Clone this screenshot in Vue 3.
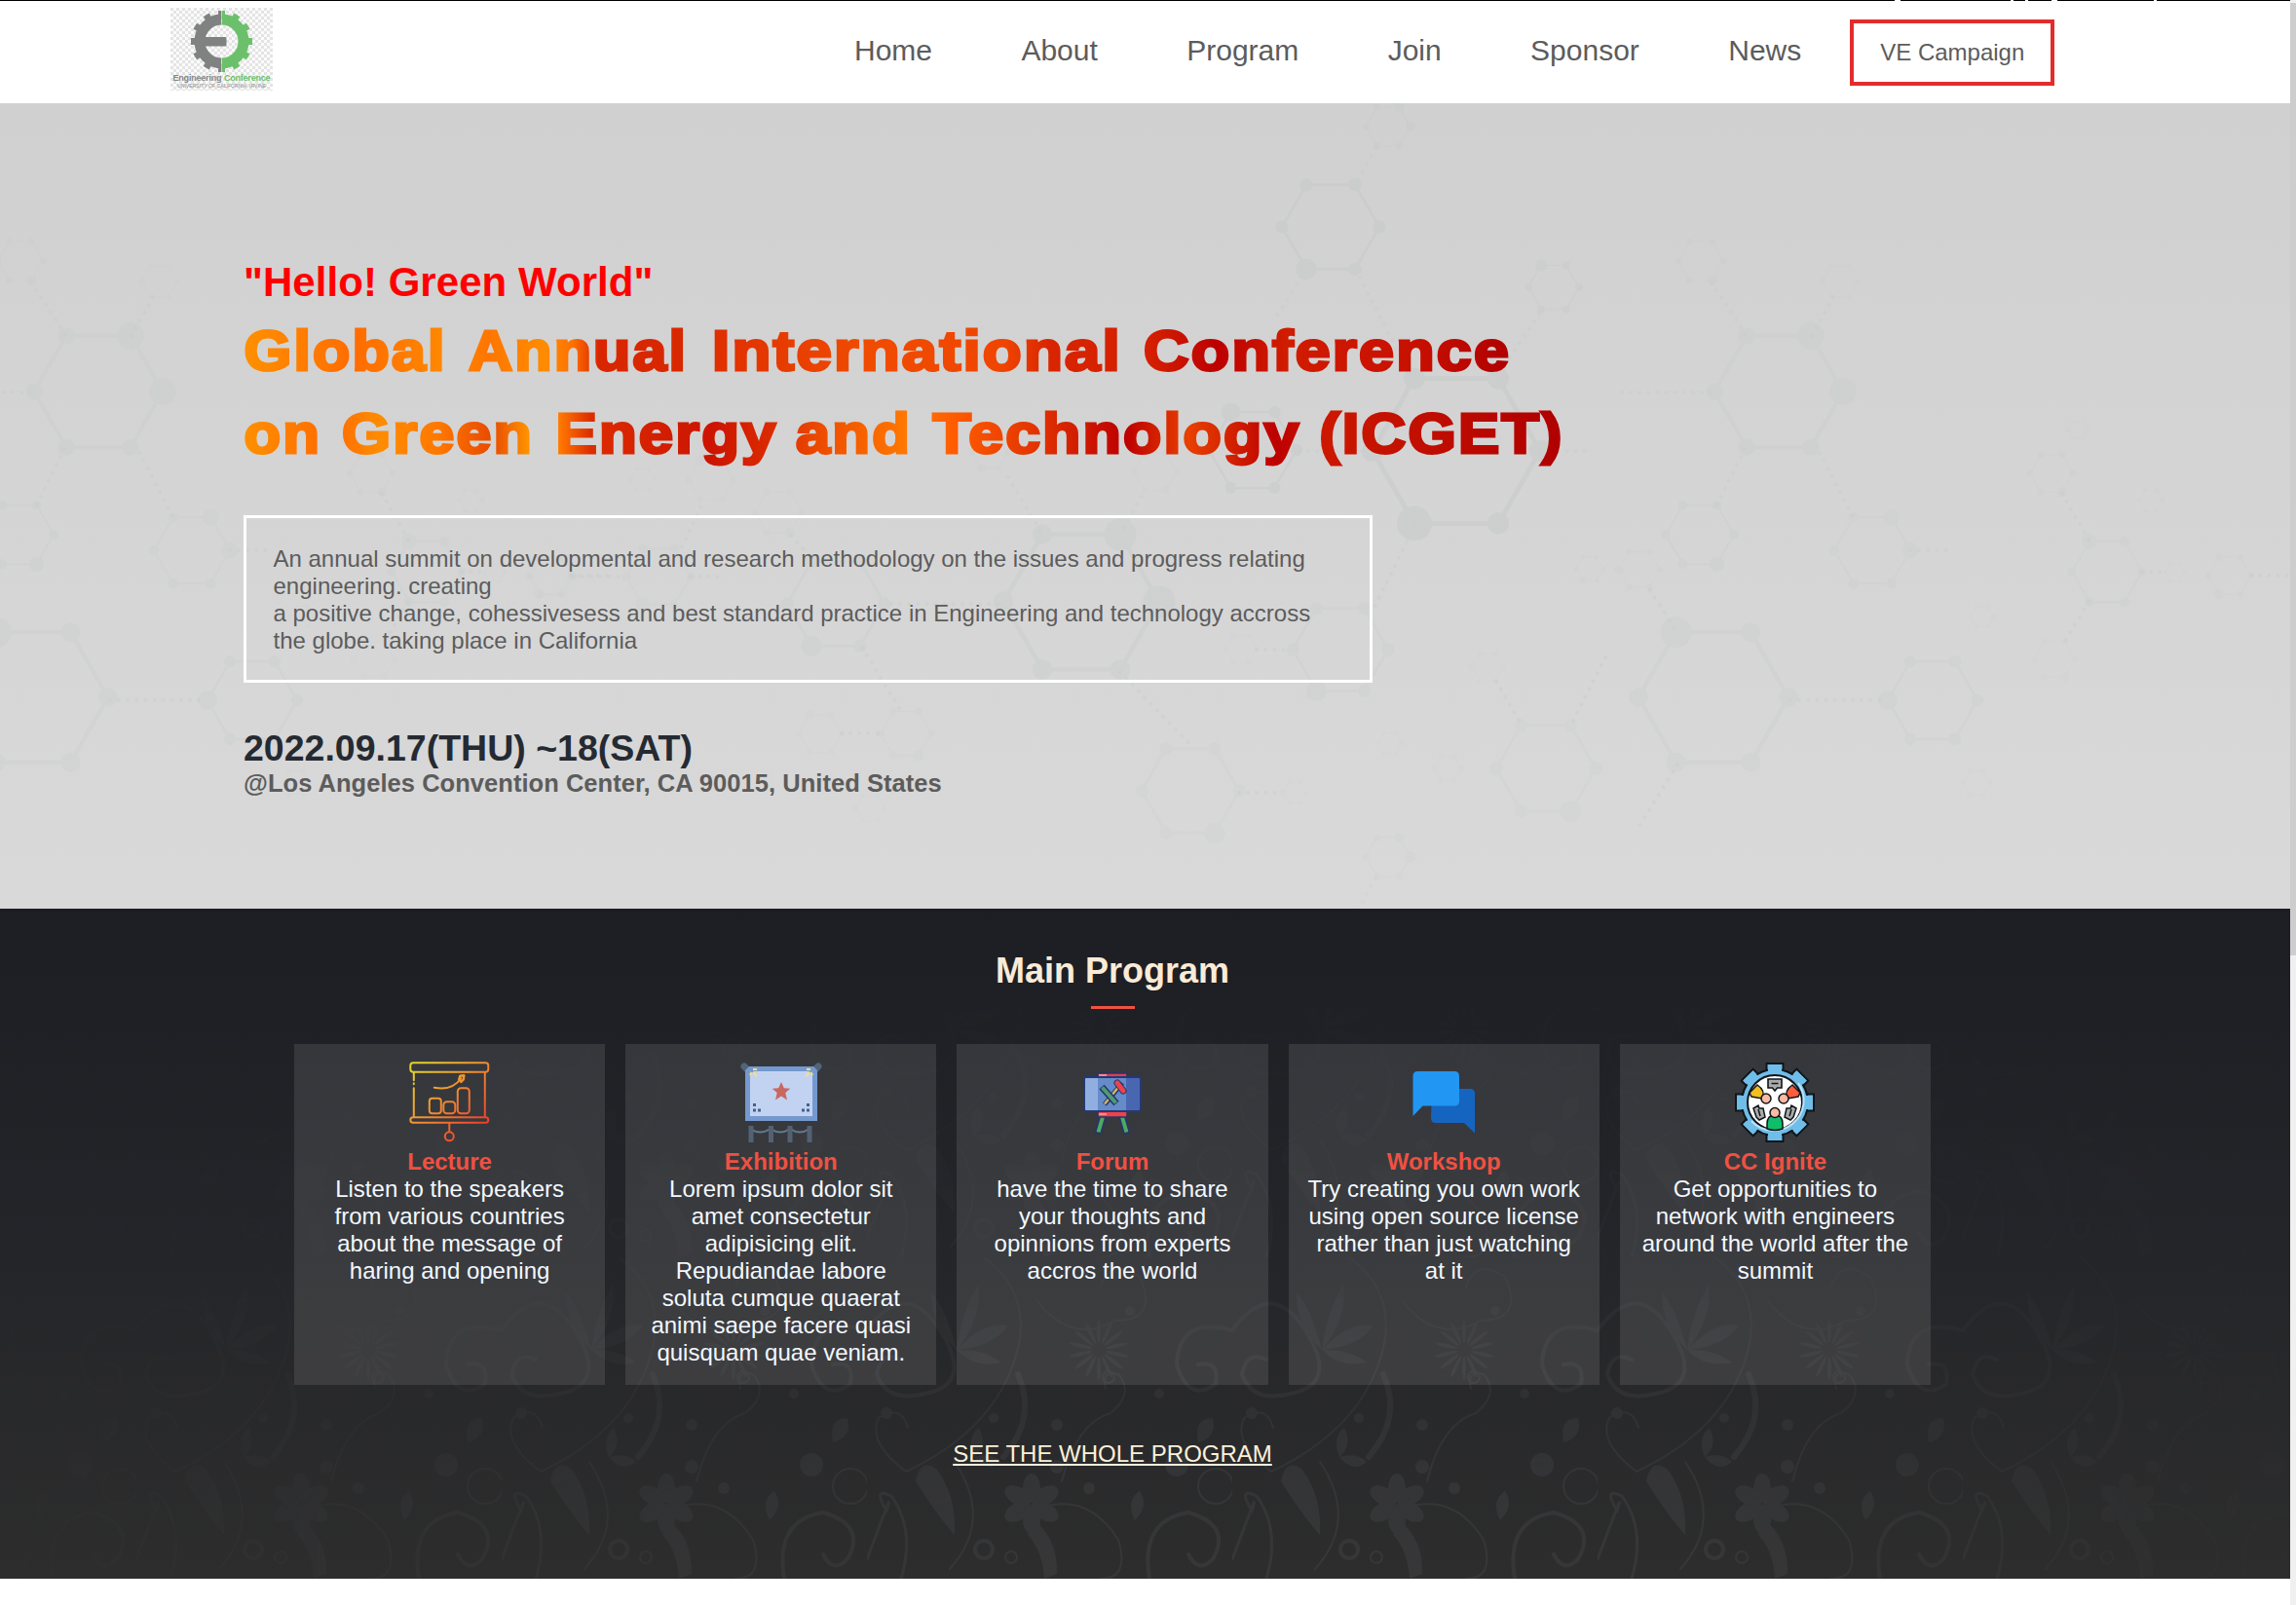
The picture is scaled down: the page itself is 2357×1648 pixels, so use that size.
<script setup>
const links = ['Home', 'About', 'Program', 'Join', 'Sponsor', 'News']

// headline words: text, start and advance width on the line
const titleLines = [
  { id: 'flame-one', y: 62.5, words: [
    ['Global', 0.5, 208], ['Annual', 231, 225], ['International', 481, 421], ['Conference', 924, 377]
  ], stops: [
    [0, '#ff9000'], [115, '#ff6c00'], [205, '#ff8800'], [250, '#ff7600'], [310, '#ff8c00'], [338, '#ff7000'],
    [365, '#d92600'], [450, '#d82800'], [490, '#e03000'], [640, '#f04c00'], [780, '#f04500'], [830, '#d82400'],
    [930, '#d42000'], [1000, '#bc0000'], [1070, '#d01c00'], [1200, '#c81000'], [1300, '#b00000']
  ] },
  { id: 'flame-two', y: 147.5, words: [
    ['on', 0.5, 79.5], ['Green', 101, 197], ['Energy', 320.5, 228], ['and', 567, 119], ['Technology', 707.5, 378],
    ['(ICGET)', 1104.5, 251]
  ], stops: [
    [0, '#ff9000'], [90, '#ff6a00'], [140, '#ff8c00'], [200, '#ff7800'], [255, '#e84a00'], [292, '#ff9200'],
    [325, '#ff7800'], [357, '#dc2c00'], [480, '#cc1400'], [545, '#dc2c00'], [600, '#f05000'], [680, '#ff7800'],
    [730, '#ff5c00'], [820, '#e03000'], [905, '#bd0000'], [970, '#e84000'], [1060, '#bd0000'], [1110, '#cc1800'],
    [1350, '#b00000']
  ] }
]

const cards = [
  { icon: 'lecture', title: 'Lecture', text: 'Listen to the speakers from various countries about the message of haring and opening' },
  { icon: 'exhibition', title: 'Exhibition', text: 'Lorem ipsum dolor sit amet consectetur adipisicing elit. Repudiandae labore soluta cumque quaerat animi saepe facere quasi quisquam quae veniam.' },
  { icon: 'forum', title: 'Forum', text: 'have the time to share your thoughts and opinnions from experts accros the world' },
  { icon: 'workshop', title: 'Workshop', text: 'Try creating you own work using open source license rather than just watching at it' },
  { icon: 'ignite', title: 'CC Ignite', text: 'Get opportunities to network with engineers around the world after the summit' }
]

// molecule cells: centre x, centre y, radius, strength
const cells = [
  [1425, 130, 23, 0.7], [1366, 233, 50, 1], [1595, 295, 26, 0.8], [1746, 268, 23, 0.5], [1889, 289, 18, 0.3],
  [1826, 402, 66, 0.6], [1495, 463, 86, 1], [1286, 462, 45, 0.9], [1745, 549, 35, 0.6], [1683, 585, 21, 0.4],
  [1922, 565, 39, 0.5], [1632, 584, 14, 0.4], [2163, 587, 36, 0.5], [2106, 486, 22, 0.5], [2133, 441, 10, 0.4],
  [2208, 514, 12, 0.4], [2289, 591, 22, 0.4], [2233, 588, 10, 0.3], [2109, 677, 21, 0.3], [1984, 719, 46, 0.5],
  [2035, 633, 12, 0.3], [2029, 804, 14, 0.25], [1759, 716, 77, 0.5], [1587, 789, 51, 0.35], [1527, 685, 16, 0.3],
  [1486, 789, 14, 0.25], [1376, 667, 49, 0.5], [1274, 666, 16, 0.3], [1222, 812, 50, 0.4], [1329, 814, 12, 0.3],
  [1427, 763, 12, 0.25], [676, 592, 33, 0.4], [730, 493, 23, 0.4], [799, 526, 24, 0.4], [660, 492, 12, 0.3],
  [567, 592, 22, 0.35], [858, 620, 50, 0.6], [842, 753, 22, 0.3], [930, 753, 26, 0.4], [893, 830, 15, 0.25],
  [1110, 618, 80, 0.7], [1016, 465, 18, 0.5], [1186, 484, 22, 0.4]
]
const hexPoints = ([x, y, r]) =>
  [0, 60, 120, 180, 240, 300]
    .map((a) => [x + r * Math.cos((a * Math.PI) / 180), y + r * Math.sin((a * Math.PI) / 180)])
const molecules = cells.map((c, i) => ({
  points: hexPoints(c).map((p) => p.map((n) => n.toFixed(1)).join(',')).join(' '),
  nodes: hexPoints(c).map((p, k) => ({
    x: p[0], y: p[1], r: c[2] * ((k * 2 + i) % 5 === 0 ? 0.2 : 0.12) + 0.8
  })),
  width: Math.max(1, c[2] * 0.06),
  opacity: c[3]
}))
const bonds = [
  'M1412 152L1391 190', 'M1341 277L1307 330', 'M1396 285L1450 390', 'M1580 322L1538 385', 'M1665 403H1758',
  'M1757 290L1793 345', 'M1882 305L1860 345', 'M1791 461L1762 520', 'M1868 465L1903 532', 'M1961 565H2000',
  'M2117 507L2145 556', 'M2144 618L2120 658', 'M2199 587H2224', 'M2311 591H2351', 'M1694 606L1722 650',
  'M1838 719H1936', 'M1722 785L1680 853', 'M1648 675L1613 744', 'M1536 700L1562 744', 'M1334 463H1406',
  'M1581 463H1630', 'M1452 540L1408 630', 'M1290 667H1325', 'M1035 490L1068 545', 'M1172 510L1150 548',
  'M915 620H1030', 'M589 592H643', 'M709 592H745', 'M700 562L722 515', 'M812 550L835 575', 'M885 665L925 730',
  'M864 753H904', 'M1150 690L1222 765', 'M1272 814H1317'
]
const petals = [0, 60, 120, 180, 240, 300]
const rays = Array.from({ length: 14 }, (_, i) => (i * 360) / 14)
const teeth = [0, 30, 60, 90, 120, 150, 180, 210, 240, 270, 300, 330]
const cogs = [0, 45, 90, 135, 180, 225, 270, 315]
</script>

<template>
  <div class="page">
    <div class="content">
      <header class="header">
        <svg class="logo" viewBox="0 0 105 85">
          <defs>
            <pattern id="checks" width="6" height="6" patternUnits="userSpaceOnUse">
              <rect width="6" height="6" fill="#fbfbfb" />
              <path d="M0 0h3v3h-3zM3 3h3v3h-3z" fill="#e4e4e4" />
            </pattern>
            <clipPath id="left-half"><rect x="0" y="0" width="52" height="85" /></clipPath>
            <clipPath id="right-half"><rect x="52.7" y="0" width="53" height="85" /></clipPath>
          </defs>
          <rect width="105" height="85" fill="url(#checks)" />
          <g v-for="h in ['left', 'right']" :key="h" :clip-path="`url(#${h}-half)`" :class="h">
            <rect v-for="a in teeth" :key="a" x="49" y="3" width="7" height="8" :transform="`rotate(${a} 52.5 34.5)`" />
            <circle cx="52.5" cy="34.5" r="22.5" fill="none" stroke-width="11" />
          </g>
          <path d="M34 30h22.5q1 0 1 1v7.500q0 1-1 1H34z" fill="#808281" />
          <text x="2.500" y="74.500" textLength="50" font-size="9" font-weight="700" fill="#858786">Engineering</text>
          <text x="55" y="74.500" textLength="47.500" font-size="9" font-weight="700" fill="#6cc06b">Conference</text>
          <text x="7" y="81.500" textLength="91" lengthAdjust="spacingAndGlyphs" font-size="5.500" fill="#8f8f8f">UNIVERSITY OF CALIFORNIA, IRVINE</text>
        </svg>
        <nav class="nav">
          <a v-for="l in links" :key="l">{{ l }}</a>
        </nav>
        <a class="campaign">VE Campaign</a>
      </header>

      <section class="hero">
        <svg class="backdrop" viewBox="0 106 2351 827">
          <defs>
            <g id="molecules" stroke="#c6cbca" fill="#c6cbca">
              <g v-for="(m, i) in molecules" :key="i" :opacity="m.opacity * 0.5">
                <polygon :points="m.points" fill="none" :stroke-width="m.width" />
                <circle v-for="(n, k) in m.nodes" :key="k" :cx="n.x" :cy="n.y" :r="n.r" stroke="none" />
              </g>
              <path v-for="b in bonds" :key="b" :d="b" fill="none" stroke-width="4" stroke-linecap="round" stroke-dasharray="0.1 9" opacity="0.35" />
            </g>
          </defs>
          <use href="#molecules" />
          <use href="#molecules" x="-1725" />
          <use href="#molecules" y="750" opacity="0.5" />
        </svg>
        <div class="hero-text">
          <p class="hello">"Hello! Green World"</p>
          <h1 class="title">
            <svg class="title-art" width="1370" height="170">
              <defs>
                <linearGradient v-for="l in titleLines" :id="l.id" :key="l.id" gradientUnits="userSpaceOnUse" x1="0" y1="0" x2="1370" y2="0">
                  <stop v-for="s in l.stops" :key="s[0]" :offset="s[0] / 1370" :stop-color="s[1]" />
                </linearGradient>
              </defs>
              <template v-for="l in titleLines" :key="l.id">
                <text
                  v-for="w in l.words"
                  :key="w[0]"
                  :x="w[1]"
                  :y="l.y"
                  :textLength="w[2]"
                  lengthAdjust="spacingAndGlyphs"
                  :fill="`url(#${l.id})`"
                  :stroke="`url(#${l.id})`"
                >{{ w[0] }}</text>
              </template>
            </svg>
          </h1>
          <p class="summary">
            An annual summit on developmental and research methodology on the issues and progress relating engineering. creating<br />
            a positive change, cohessivesess and best standard practice in Engineering and technology accross the globe. taking place in California
          </p>
          <p class="date">2022.09.17(THU) ~18(SAT)</p>
          <p class="place">@Los Angeles Convention Center, CA 90015, United States</p>
        </div>
      </section>

      <section class="program">
        <svg class="backdrop floral" width="2351" height="688">
          <defs>
            <pattern id="floral" x="140" y="28" width="375" height="330" patternUnits="userSpaceOnUse">
              <g fill="none" stroke="#48494c" stroke-width="2" stroke-linecap="round">
                <path d="M0 75Q40 20 75 75T60 140Q20 150 10 120Q15 95 35 105" stroke-width="4" />
                <path d="M120 0Q175 40 150 110T40 220Q0 190 12 165Q35 150 42 175" />
                <path d="M375 75Q320 60 318 110Q330 150 358 130Q362 105 340 110" stroke-width="4" />
                <path d="M200 230Q215 170 250 160Q275 140 258 120Q240 115 245 135M185 255Q230 245 258 290Q270 330 240 330" />
                <path d="M290 330Q280 270 330 262Q375 275 355 310Q340 325 330 305" stroke-width="4" />
                <path d="M0 310Q30 230 20 260Q5 235 25 245Q50 280 35 330" stroke-width="3" />
                <path d="M175 45Q210 90 255 65Q300 65 280 20Q250 0 240 30M90 210Q130 270 85 320" />
                <path d="M155 120Q175 165 140 205" stroke-width="6" />
                <circle cx="120" cy="300" r="9" stroke-width="4" /><circle cx="148" cy="308" r="6" />
                <circle cx="248" cy="123" r="6" /><circle cx="358" cy="235" r="18" />
              </g>
              <g fill="#48494c">
                <ellipse v-for="a in petals" :key="a" cx="169" cy="237" rx="9" ry="15" :transform="`rotate(${a} 169 253)`" />
                <ellipse v-for="a in rays" :key="a" cx="238" cy="76" rx="2" ry="12" :transform="`rotate(${a} 238 95)`" />
                <path d="M92 95Q65 70 66 35Q82 55 92 95Q97 55 114 28Q119 62 92 95Q120 65 145 70Q130 92 92 95Q120 94 138 108Q110 114 92 95" />
                <path d="M50 230Q55 205 72 218Q92 245 90 285Q72 265 50 230M172 270Q196 290 195 325L182 330Q180 300 165 285Z" />
                <path d="M110 205q-8 -20 5 -30q9 18 -5 30q18 -5 28 5q-15 12 -28 -5M275 270q-10 -20 5 -30q10 15 -5 30M340 190q-5 -25 15 -25q5 20 -15 25" />
                <circle cx="318" cy="213" r="12" /><circle cx="195" cy="215" r="7" /><circle cx="228" cy="237" r="6" /><circle cx="130" cy="165" r="5" />
                <circle cx="270" cy="55" r="5" /><circle cx="20" cy="160" r="6" /><circle cx="195" cy="172" r="6" /><circle cx="300" cy="140" r="5" />
              </g>
            </pattern>
          </defs>
          <rect width="2351" height="688" fill="url(#floral)" />
        </svg>
        <div class="program-inner">
          <h2 class="heading">Main Program</h2>
          <span class="rule"></span>
          <div class="cards">
            <article v-for="c in cards" :key="c.title" class="card">
              <svg v-if="c.icon === 'lecture'" class="icon" viewBox="0.7 0.7 84 84">
                <defs>
                  <linearGradient id="warm" gradientUnits="userSpaceOnUse" x1="8" y1="8" x2="68" y2="72">
                    <stop offset="0" stop-color="#e3d02d" /><stop offset="0.45" stop-color="#ef9431" /><stop offset="1" stop-color="#f0402b" />
                  </linearGradient>
                </defs>
                <g fill="none" stroke="url(#warm)" stroke-width="2" stroke-linecap="round" stroke-linejoin="round">
                  <rect x="2" y="2" width="80" height="9.500" rx="3" />
                  <path d="M5.500 12V20M5.500 23V24M5.500 28V57M78.500 12V57" />
                  <rect x="2" y="58" width="80" height="5.500" rx="2.700" />
                  <rect x="21.500" y="38.500" width="12" height="15.500" rx="3" />
                  <rect x="36" y="42" width="12" height="12" rx="3.500" />
                  <rect x="50.500" y="28" width="12" height="26" rx="3.500" />
                  <path d="M26.500 27.500Q45 31 54 18" /><path d="M52 19l1-3.500 4-.5-.5 4-2.500 2.500z" stroke-width="2.500" />
                  <path d="M42 64V72" /><circle cx="42" cy="77.500" r="4.500" />
                </g>
              </svg>

              <svg v-else-if="c.icon === 'exhibition'" class="icon" viewBox="0 0 84 84">
                <path d="M4 5L9 10M80 5L75 10" stroke="#526478" stroke-width="7" stroke-linecap="round" />
                <path d="M9 5H75L79 9V61H5V9Z" fill="#7599cf" />
                <path d="M14 10H70L74 14V56H10V14Z" fill="#c2d3f2" />
                <path d="M13 8h4M10 14l1.500-3M13 11l4 4M68 8h4M74 14l-1.500-3M71 11l-4 4" stroke="#f5dc91" stroke-width="2" />
                <path d="M42 21l2.800 6.200 6.500.5-5 4.400 1.700 7.300-6-3.800-6 3.800 1.700-7.300-5-4.400 6.500-.5z" fill="#c96760" />
                <path d="M13 43h3v3h-3zM13 48.500h3v3h-3zM18 48.500h3v3h-3zM68 43h3v3h-3zM68 48.500h3v3h-3zM63 48.500h3v3h-3z" fill="#45618c" />
                <path d="M10 69q10 7 21 0q10 7 20 0q10 7 20 0" fill="none" stroke="#627a92" stroke-width="2" />
                <path d="M11 66v17M31.500 66v17M51 66v17M71 66v17" stroke="#526273" stroke-width="5" />
              </svg>

              <svg v-else-if="c.icon === 'forum'" class="icon" viewBox="0 0 84 84">
                <path d="M32 56L27 74M52 56L57 74" stroke="#24346f" stroke-width="7" />
                <path d="M32 57L27.500 72.500M52 57L56.500 72.500" stroke="#4fa860" stroke-width="4" />
                <rect x="27" y="12" width="30" height="6" fill="#e33d4a" stroke="#24346f" stroke-width="1.500" />
                <rect x="27" y="51" width="30" height="6" fill="#f04248" stroke="#24346f" stroke-width="1.500" />
                <path d="M28 14h8M28 54h8" stroke="#ff8b82" stroke-width="2" />
                <rect x="13" y="16" width="58" height="35" rx="2" fill="#668bc9" />
                <path d="M13 16h14v35H13z" fill="#90afe0" /><path d="M56 16h15v35H56z" fill="#4967b0" />
                <rect x="13" y="16" width="58" height="35" rx="2" fill="none" stroke="#273777" stroke-width="2" />
                <path d="M34 44L52 22" stroke="#24346f" stroke-width="5" /><path d="M34 43.500L50 24" stroke="#d2b765" stroke-width="2.500" />
                <path d="M31 26L46 43" stroke="#24346f" stroke-width="7" /><path d="M31.500 26.500L45.500 42.500" stroke="#4f9b72" stroke-width="4" />
                <path d="M47 22L53 30" stroke="#24346f" stroke-width="7" stroke-linecap="round" /><path d="M47 22L53 30" stroke="#ec444c" stroke-width="5" stroke-linecap="round" />
              </svg>

              <svg v-else-if="c.icon === 'workshop'" class="icon" viewBox="0 0 84 84">
                <path d="M30 28H69q5 0 5 5V73.500L63 63H34q-5 0-5-5z" fill="#1565c0" />
                <path d="M16 10H53q5 0 5 5V40.500q0 5-5 5H20.500L10.500 56V15q0-5 5-5z" fill="#2196f3" />
              </svg>

              <svg v-else class="icon" viewBox="0 0 84 84">
                <g fill="#6fbde9" stroke="#101519" stroke-width="2">
                  <path v-for="a in cogs" :key="a" d="M32 16L33.500 9V2H50.500V9L52 16" :transform="`rotate(${a} 42 42)`" />
                  <circle cx="42" cy="42" r="34" />
                </g>
                <path v-for="a in cogs" :key="a" d="M34 18L35 9V3H49V9L50 18z" fill="#6fbde9" :transform="`rotate(${a} 42 42)`" />
                <circle cx="42" cy="42" r="28" fill="#fff" stroke="#101519" stroke-width="2" />
                <path d="M66 22a31 31 0 0 1-48 39" fill="none" stroke="#bfe3fb" stroke-width="2" />
                <path d="M35 18h14v9h-4.500L42 30l-2.500-3H35z" fill="#aaa" stroke="#101519" stroke-width="1.600" /><path d="M38.500 22.500h7" stroke="#101519" stroke-width="1.500" />
                <g stroke="#101519" stroke-width="1.500">
                  <path d="M16 32L24 24Q33 30 29 38L18 36z" fill="#f2bf1f" /><path d="M68 32L60 24Q51 30 55 38L66 36z" fill="#ff5f3d" />
                  <circle cx="33" cy="38" r="5" fill="#ffb8a2" /><circle cx="51" cy="38" r="5" fill="#ffb8a2" />
                  <path d="M34 69V64q0-9 8-9t8 9v5q-8 3-16 0z" fill="#10bd6b" /><circle cx="42" cy="52.500" r="5" fill="#ffb8a2" />
                  <path d="M20 48l5-3 1 3 4 0 2 9-6 3-3-3zM64 48l-5-3-1 3-4 0-2 9 6 3 3-3z" fill="#aaa" />
                  <path d="M25 49l2 7M59 49l-2 7" />
                </g>
              </svg>
              <h3 class="card-title">{{ c.title }}</h3>
              <p class="card-text">{{ c.text }}</p>
            </article>
          </div>
          <a class="more">SEE THE WHOLE PROGRAM</a>
        </div>
      </section>
    </div>
    <div class="scrollbar"><span class="thumb"></span></div>
  </div>
</template>

<style>
body { background: #fff; overflow: hidden; }
</style>

<style scoped>
.page {
  display: flex;
  width: 2357px;
  height: 1648px;
  overflow: hidden;
  font-family: "Liberation Sans", Arial, sans-serif;
  font-size: 24px;
  line-height: 28px;
}
.page p, .page h1, .page h2, .page h3 { margin: 0; }
.content { width: 2351px; }
.scrollbar { width: 6px; padding-top: 3px; box-sizing: border-box; background: #f0f0f0; }
.thumb { display: block; height: 978px; background: #cdcdcd; }

.header {
  display: flex;
  align-items: flex-start;
  height: 106px;
  box-sizing: border-box;
  padding-top: 1px;
  background:
    linear-gradient(90deg, #000 1945px, #fff 1945px 1951px, #000 1951px 2064px, #fff 2064px 2067px, #000 2067px 2079px, #fff 2079px 2082px, #000 2082px 2106px, #fff 2106px 2112px, #000 2112px 2211px, #fff 2211px 2214px, #000 2214px) 0 0 / 100% 1px no-repeat,
    #fff;
  color: #5c5c5c;
}
.logo { width: 105px; height: 85px; margin: 7px 0 0 175px; }
.left { fill: #808281; stroke: #808281; }
.right { fill: #6cc06b; stroke: #6cc06b; }
.left rect, .right rect { stroke: none; }
.nav { display: flex; gap: 91.4px; margin: 33px 0 0 597px; font-size: 30px; line-height: 35px; }
.campaign {
  width: 210px;
  height: 68px;
  margin: 19px 0 0 50px;
  box-sizing: border-box;
  border: 4px solid #e32d2d;
  line-height: 60px;
  text-align: center;
}

.hero {
  position: relative;
  height: 827px;
  background: linear-gradient(#d0d0d0, #d9d9d9);
}
.backdrop { position: absolute; inset: 0; width: 2351px; height: 100%; }
.hero-text { position: relative; padding: 159px 0 0 250px; color: #5c5c5c; }
.hello { color: #f00; font-size: 42px; font-weight: 700; line-height: 49px; letter-spacing: 0.05px; }
.title { height: 173px; padding-top: 3px; box-sizing: border-box; }
.title-art {
  display: block;
  overflow: visible;
  font-size: 58px;
  font-weight: 700;
  letter-spacing: 2px;
  stroke-width: 3px;
}
.summary {
  width: 1159px;
  height: 172px;
  box-sizing: border-box;
  margin-top: 42px !important;
  padding: 28px 48px 0 27.5px;
  border: 3px solid #fff;
}
.date { margin-top: 46px !important; color: #252a32; font-size: 37.5px; font-weight: 700; line-height: 43px; }
.place { font-size: 25.5px; font-weight: 700; line-height: 29px; letter-spacing: 0.04px; }

.program {
  position: relative;
  height: 688px;
  background: linear-gradient(#1c1e23, #242529 50%, #2d2d2d);
}
.floral {
  opacity: 0.36;
  -webkit-mask-image: linear-gradient(transparent 5%, rgba(0, 0, 0, 0.25) 45%, #000 90%), linear-gradient(90deg, rgba(0, 0, 0, 0.1), #000 45%, #000 75%, rgba(0, 0, 0, 0.1));
  -webkit-mask-composite: source-in;
  mask-composite: intersect;
}
.program-inner {
  position: relative;
  display: flex;
  flex-direction: column;
  align-items: center;
  width: 1680px;
  margin-left: 302px;
  padding-top: 43px;
}
.heading { color: #faebd7; font-size: 36px; line-height: 41px; }
.rule { width: 45px; height: 3px; margin: 16px 0 36px; background: #ef5340; }
.cards { display: grid; grid-template-columns: repeat(5, 1fr); gap: 21px; width: 100%; height: 350px; }
.card {
  display: flex;
  flex-direction: column;
  align-items: center;
  padding: 18px 18px 0;
  background: rgba(255, 255, 255, 0.1);
  text-align: center;
}
.icon { width: 84px; height: 84px; margin-bottom: 5px; flex: none; }
.card-title { color: #ef5142; font-size: 24px; line-height: 28px; }
.card-text { color: #f3f8ff; }
.more { margin-top: 57px; color: #fdf0da; text-decoration: underline; }
</style>
